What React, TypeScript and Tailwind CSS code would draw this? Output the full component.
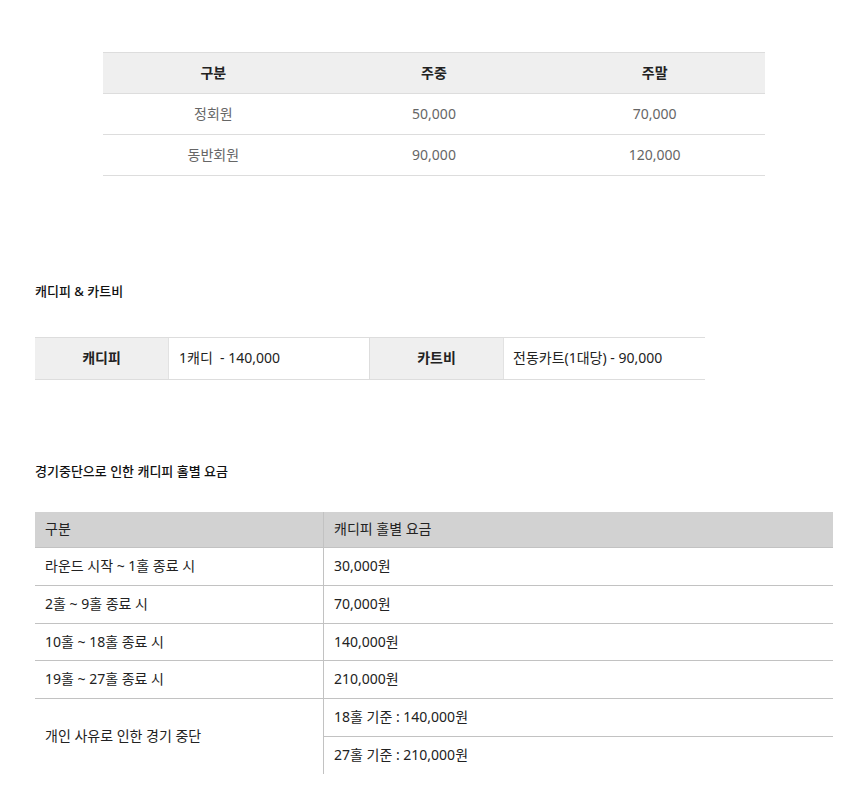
import React from "react";

const font = { fontFamily: '"Noto Sans", "Noto Sans CJK KR", sans-serif' };

export default function App() {
  return (
    <div className="w-[856px] min-h-[811px] bg-white text-[14px]" style={font}>
      {/* Table 1 */}
      <div className="pt-[52px] pl-[103px]">
        <div className="w-[662px]">
          <div className="grid grid-cols-3 h-[42px] pb-[2px] border-y border-[#dddddd] bg-[#efefef] items-center text-center font-semibold text-[#222]">
            <div>구분</div>
            <div>주중</div>
            <div>주말</div>
          </div>
          <div className="grid grid-cols-3 h-[41px] pb-[2px] border-b border-[#dddddd] items-center text-center text-[#666]">
            <div>정회원</div>
            <div>50,000</div>
            <div>70,000</div>
          </div>
          <div className="grid grid-cols-3 h-[41px] pb-[2px] border-b border-[#dddddd] items-center text-center text-[#666]">
            <div>동반회원</div>
            <div>90,000</div>
            <div>120,000</div>
          </div>
        </div>
      </div>

      {/* Section 2 */}
      <div className="pl-[35px]">
        <div className="mt-[105px] h-[20px] leading-[20px] text-[13px] font-medium text-[#111]">캐디피 &amp; 카트비</div>
        <div className="mt-[36px] w-[670px] grid grid-cols-[134px_201px_134px_201px] h-[43px] border-y border-[#dddddd] text-[#222]">
          <div className="bg-[#efefef] border-r border-[#e2e2e2] flex items-center justify-center pb-[2px] font-semibold">캐디피</div>
          <div className="border-r border-[#dddddd] flex items-center pb-[2px] pl-[10px]">1캐디&nbsp; - 140,000</div>
          <div className="bg-[#efefef] border-r border-[#e2e2e2] flex items-center justify-center pb-[2px] font-semibold">카트비</div>
          <div className="flex items-center pb-[2px] pl-[9px]">전동카트(1대당) - 90,000</div>
        </div>

        <div className="mt-[81px] h-[20px] leading-[20px] text-[13px] font-medium text-[#111]">경기중단으로 인한 캐디피 홀별 요금</div>

        {/* Table 3 */}
        <div className="mt-[31px] w-[798px] text-[#222]">
          <div className="grid grid-cols-[289px_509px] h-[36px] bg-[#d2d2d2] border-b border-[#c2c2c2]">
            <div className="flex items-center pb-[2px] pl-[10px] border-r border-[#c2c2c2]">구분</div>
            <div className="flex items-center pb-[2px] pl-[10px]">캐디피 홀별 요금</div>
          </div>
          {[
            ["라운드 시작 ~ 1홀 종료 시", "30,000원", "h-[38px]"],
            ["2홀 ~ 9홀 종료 시", "70,000원", "h-[38px]"],
            ["10홀 ~ 18홀 종료 시", "140,000원", "h-[37px]"],
            ["19홀 ~ 27홀 종료 시", "210,000원", "h-[38px]"],
          ].map(([a, b, h]) => (
            <div key={a} className={`grid grid-cols-[289px_509px] border-b border-[#c2c2c2] ${h}`}>
              <div className="flex items-center pb-[2px] pl-[10px] border-r border-[#c2c2c2]">{a}</div>
              <div className="flex items-center pb-[2px] pl-[10px]">{b}</div>
            </div>
          ))}
          <div className="grid grid-cols-[289px_509px]">
            <div className="flex items-center pb-[2px] pl-[10px] border-r border-[#c2c2c2]">개인 사유로 인한 경기 중단</div>
            <div className="flex flex-col">
              <div className="h-[38px] flex items-center pb-[2px] pl-[10px] border-b border-[#c2c2c2]">18홀 기준 : 140,000원</div>
              <div className="h-[37px] flex items-center pb-[2px] pl-[10px]">27홀 기준 : 210,000원</div>
            </div>
          </div>
        </div>
      </div>
    </div>
  );
}
